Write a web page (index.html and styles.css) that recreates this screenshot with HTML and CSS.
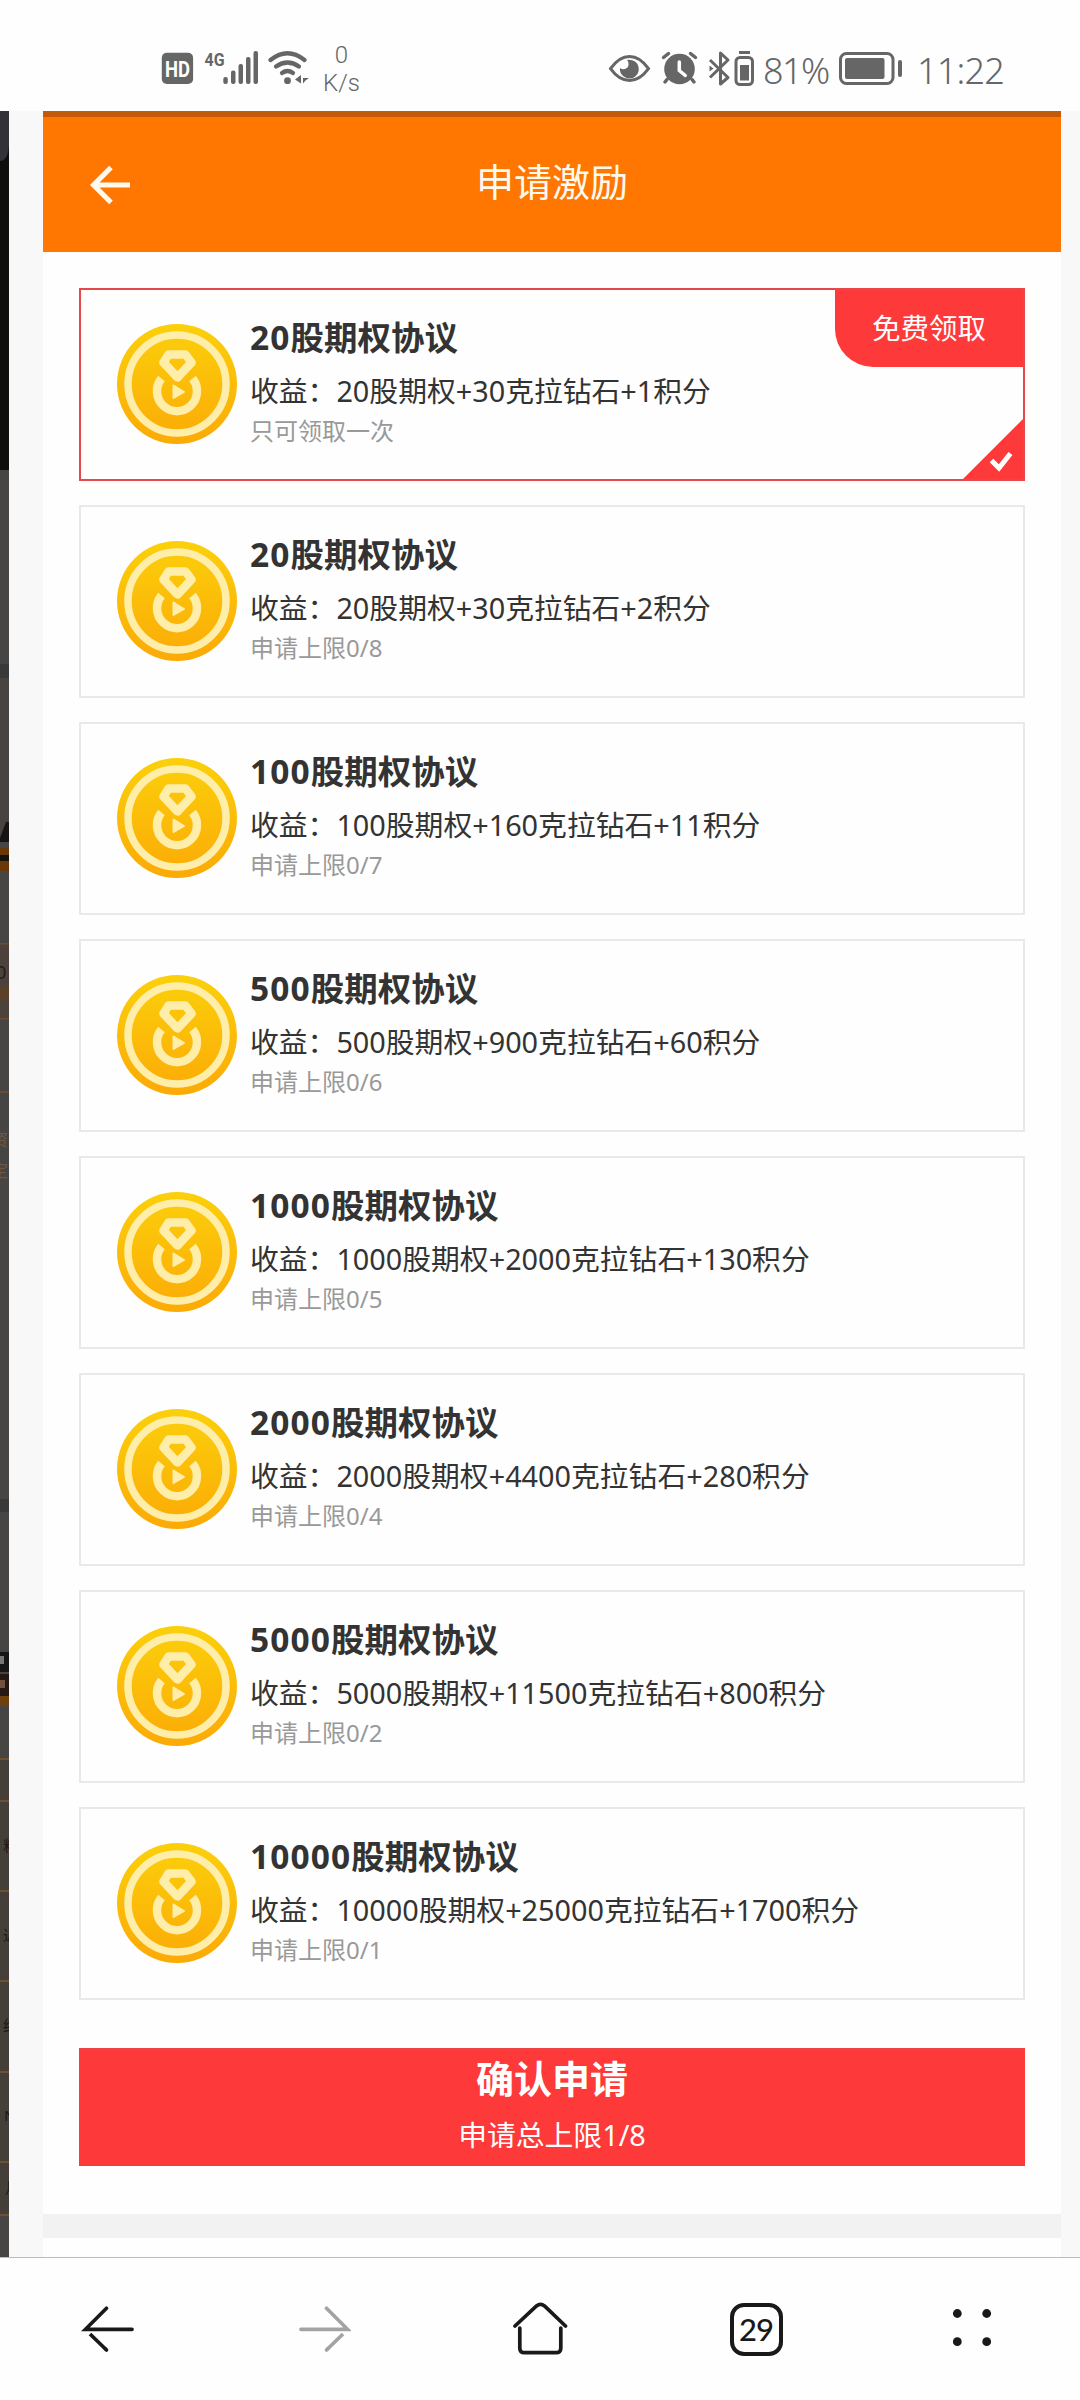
FILE: index.html
```html
<!DOCTYPE html>
<html lang="zh-CN">
<head>
<meta charset="utf-8">
<title>申请激励</title>
<link rel="stylesheet" href="styles.css">
</head>
<body>
<svg class="defs" aria-hidden="true">
  <defs>
    <linearGradient id="gold" x1="0" y1="0" x2="0" y2="1"><stop offset="0" stop-color="#fbd00b"/><stop offset="1" stop-color="#fbaa06"/></linearGradient>
    <symbol id="coin" viewBox="0 0 120 120">
      <circle cx="60" cy="60" r="60" fill="url(#gold)"/>
      <circle cx="60" cy="60" r="49" fill="none" stroke="#ffedaa" stroke-width="7.5"/>
      <path d="M44.5 54.5A20 20 0 1 0 75.500 54.500" fill="none" stroke="#ffedaa" stroke-width="8.500"/>
      <path d="M51.500 30.500H68.500L74.500 38.500L60.500 53.500L46.500 38.500Z" fill="none" stroke="#ffedaa" stroke-width="8.500" stroke-linejoin="round"/>
      <path d="M56.500 61.500L67 68L56.500 74Z" fill="#ffedaa" stroke="#ffedaa" stroke-width="2" stroke-linejoin="round"/>
    </symbol>
  </defs>
</svg>
<header class="status">
  <div class="status-left">
    <svg class="net" width="150" height="44" viewBox="160 48 150 44" fill="#666">
      <rect x="161.800" y="52.700" width="31.300" height="31.300" rx="5"/>
      <text class="hd" x="165" y="76.500" textLength="25" lengthAdjust="spacingAndGlyphs">HD</text>
      <text class="g4" x="204.500" y="65.500" textLength="20" lengthAdjust="spacingAndGlyphs">4G</text>
      <rect x="223.300" y="77" width="4.500" height="7" rx="2"/><rect x="231" y="70.500" width="4.500" height="13.500" rx="2"/><rect x="238.500" y="64" width="4.500" height="20" rx="2"/><rect x="246" y="57" width="4.500" height="27" rx="2"/><rect x="253.500" y="51" width="4.500" height="33" rx="2"/>
      <g fill="none" stroke="#666" stroke-width="4.200" stroke-linecap="round"><path d="M270.500 60Q287.500 46.500 304.500 60"/><path d="M276 66.500Q287.500 58.500 299 66.500"/><path d="M282 73Q287.500 69 293 73"/></g>
      <circle cx="287.500" cy="80.700" r="3.400"/><path d="M301 75v8.500l-6-4zM303 78h6l-3.500 2.500-2.500 3z"/>
    </svg>
    <div class="speed"><span>0</span><span>K/s</span></div>
  </div>
  <div class="status-right">
    <svg width="108" height="40" viewBox="608 50 108 40" fill="#666">
      <path d="M611.500 68.700Q620 56.500 630.500 56.500T649.500 68.700Q641 80.500 630.500 80.500T611.500 68.700Z" fill="none" stroke="#666" stroke-width="3"/>
      <path d="M628 60a9.400 9.400 0 1 1-7 8c4 3 9 0 8.500-4 0-2-.5-3-1.500-4Z"/>
      <circle cx="680.500" cy="69" r="15.300"/>
      <path d="M664.500 57.500l5-4M696.500 57.500l-5-4M668 79.500l-2 2.500M693 79.500l2 2.500" stroke="#666" stroke-width="3.500" stroke-linecap="round"/>
      <path d="M680.300 62v8.500l6 5" fill="none" stroke="#fff" stroke-width="3.500" stroke-linecap="round"/>
    </svg>
    <svg width="48" height="40" viewBox="708 50 48 40">
      <g fill="none" stroke="#666" stroke-width="3"><path d="M711 60L729 77.500L721.500 84V53L729 60L711 77.500" stroke-linejoin="round"/><rect x="737" y="57.500" width="16.500" height="27" rx="4"/><path d="M740 52.500h11"/></g><path d="M710.500 65.500l4 3-4 3zM741 65h9v15.500h-9z" fill="#666"/>
    </svg>
    <span class="pct">81%</span>
    <svg class="batt" width="66" height="36" viewBox="838 50 66 36" fill="#666"><rect x="840.500" y="53.500" width="52.500" height="30" rx="6" fill="none" stroke="#666" stroke-width="3"/><rect x="845" y="58" width="39.500" height="21" rx="2"/><rect x="898" y="60" width="4" height="17" rx="2"/></svg>
    <span class="time">11:22</span>
  </div>
</header>
<main class="view">
  <svg class="behind" width="9" height="2146" viewBox="0 111 9 2146">
    <rect y="111" width="9" height="359" fill="#0e0e0c"/><path d="M0 111H9V145Q8 161 0 161Z" fill="#333238"/>
    <rect y="470" width="9" height="1787" fill="#464544"/>
    <rect y="664" width="9" height="14" fill="#393939"/><rect y="678" width="9" height="150" fill="#484341"/>
    <path d="M9 822V842H0V838L6 822Z" fill="#161414"/>
    <rect y="848" width="9" height="23" fill="#6a3808"/><rect y="855" width="9" height="6" fill="#151311"/>
    <rect y="943" width="9" height="75" fill="#4c423b"/><rect y="988" width="9" height="12" fill="#5c4129"/>
    <g fill="#6a4c31"><rect y="943" width="9" height="1.500"/><rect y="1018" width="9" height="1.500"/><rect y="1091" width="9" height="2"/></g>
    <text x="-4" y="979" font-size="18" fill="#201d1a">0|</text>
    <text x="-9" y="1146" font-size="17" fill="#70583e">资讯</text><text x="-9" y="1177" font-size="17" fill="#70583e">定价</text>
    <rect y="1499" width="9" height="13" fill="#393939"/>
    <rect y="1652" width="9" height="20" fill="#171717"/><rect y="1656" width="4" height="8" fill="#777"/><rect y="1674" width="9" height="22" fill="#241914"/><rect y="1680" width="5" height="8" fill="#74513d"/><rect y="1696" width="9" height="10" fill="#70400c"/>
    <rect y="1758" width="9" height="457" fill="#453f3a"/>
    <g fill="#70502f"><rect y="1758" width="9" height="2"/><rect y="1800" width="9" height="2"/><rect y="1890" width="9" height="2"/><rect y="1980" width="9" height="2"/><rect y="2071" width="9" height="2"/><rect y="2161" width="9" height="2"/><rect y="2214" width="9" height="2"/></g>
    <g fill="#1c1917" font-size="15"><text x="3" y="1851">料</text><text x="3" y="1941">近</text><text x="3" y="2031">约</text><text x="4" y="2121">N</text><text x="5" y="2193">月</text></g>
  </svg>
  <section class="page">
    <div class="topbar">
      <svg class="back" width="42" height="42" viewBox="0 0 42 42"><path d="M41 21H5M22 3.500L4.500 21L22 38.500" fill="none" stroke="#fffaf0" stroke-width="5"/></svg>
      <h1>申请激励</h1>
    </div>
    <div class="content">
      <ul class="plans">
        <li class="plan selected"><svg class="coin"><use href="#coin"/></svg><div class="info"><h2><b>20</b>股期权协议</h2><p>收益：20股期权+30克拉钻石+1积分</p><small>只可领取一次</small></div><span class="badge">免费领取</span><svg class="tick" width="60" height="60" viewBox="0 0 60 60"><path d="M60 0V60H0Z" fill="#fe3939"/><path d="M28.500 41.500L36 49L47.500 34.500" fill="none" stroke="#fff" stroke-width="5"/></svg></li>
        <li class="plan"><svg class="coin"><use href="#coin"/></svg><div class="info"><h2><b>20</b>股期权协议</h2><p>收益：20股期权+30克拉钻石+2积分</p><small>申请上限0/8</small></div></li>
        <li class="plan"><svg class="coin"><use href="#coin"/></svg><div class="info"><h2><b>100</b>股期权协议</h2><p>收益：100股期权+160克拉钻石+11积分</p><small>申请上限0/7</small></div></li>
        <li class="plan"><svg class="coin"><use href="#coin"/></svg><div class="info"><h2><b>500</b>股期权协议</h2><p>收益：500股期权+900克拉钻石+60积分</p><small>申请上限0/6</small></div></li>
        <li class="plan"><svg class="coin"><use href="#coin"/></svg><div class="info"><h2><b>1000</b>股期权协议</h2><p>收益：1000股期权+2000克拉钻石+130积分</p><small>申请上限0/5</small></div></li>
        <li class="plan"><svg class="coin"><use href="#coin"/></svg><div class="info"><h2><b>2000</b>股期权协议</h2><p>收益：2000股期权+4400克拉钻石+280积分</p><small>申请上限0/4</small></div></li>
        <li class="plan"><svg class="coin"><use href="#coin"/></svg><div class="info"><h2><b>5000</b>股期权协议</h2><p>收益：5000股期权+11500克拉钻石+800积分</p><small>申请上限0/2</small></div></li>
        <li class="plan"><svg class="coin"><use href="#coin"/></svg><div class="info"><h2><b>10000</b>股期权协议</h2><p>收益：10000股期权+25000克拉钻石+1700积分</p><small>申请上限0/1</small></div></li>
      </ul>
      <button class="confirm"><strong>确认申请</strong><span>申请总上限1/8</span></button>
    </div>
    <div class="divider"></div>
  </section>
</main>
<nav class="browser-nav">
  <a><svg width="54" height="54" viewBox="0 0 54 54" fill="none" stroke="#191919" stroke-width="3.700" stroke-linecap="round"><path d="M51 27.300H4.500L25.500 6.300"/><path d="M9 32L25 47.500" stroke-linecap="butt"/><path d="M24.500 47L25.500 48"/></svg></a>
  <a><svg width="54" height="54" viewBox="0 0 54 54" fill="none" stroke="#a3a3a3" stroke-width="3.700" stroke-linecap="round"><path d="M4 27.300H50.500L29.500 6.300"/><path d="M46 32L30 47.500" stroke-linecap="butt"/><path d="M30.500 47L29.500 48"/></svg></a>
  <a><svg width="56" height="56" viewBox="0 0 56 56" fill="none" stroke="#191919" stroke-width="3.700" stroke-linecap="round"><path d="M3 25L24.500 5Q28.500 1.800 32.500 5L53.500 25"/><path d="M7.800 27V47Q7.800 51.700 12.500 51.700H44Q48.800 51.700 48.800 47V27"/></svg></a>
  <a><span class="tabs">29</span></a>
  <a><svg width="40" height="40" viewBox="0 0 40 40" fill="#191919"><circle cx="5.300" cy="4.500" r="4.400"/><circle cx="34.700" cy="4.500" r="4.400"/><circle cx="5.300" cy="32.700" r="4.400"/><circle cx="34.700" cy="32.700" r="4.400"/></svg></a>
</nav>
</body>
</html>
```
FILE: styles.css
```css
* { box-sizing: border-box; margin: 0; padding: 0; }
body { width: 1080px; height: 2400px; overflow: hidden; background: #fefefe; font-family: "Noto Sans", "Noto Sans CJK SC", sans-serif; color: #333; }
svg { display: block; flex: none; }
.defs { position: absolute; width: 0; height: 0; }
.status { height: 111px; display: flex; justify-content: space-between; padding: 48px 77px 0 160px; color: #666; }
.status-left, .status-right { display: flex; }
.hd { font: bold 22px Roboto, sans-serif; fill: #fff; }
.g4 { font: bold 19px Roboto, sans-serif; }
.speed { width: 62px; margin: -7px 0 0 0; padding-left: 1px; display: flex; flex-direction: column; align-items: center; font: 350 24px/28px Roboto, sans-serif; white-space: nowrap; }
.status-right { align-items: flex-start; padding-top: 2px; }
.status-right svg + svg { margin-left: -8px; }
.status-right .pct { margin: -1px 0 0 8px; width: 75px; font: 350 36px/44px "Noto Sans", sans-serif; letter-spacing: -1.5px; white-space: nowrap; }
.status-right .batt { margin: 0; }
.time { margin: -1px 0 0 13px; width: 86px; font: 350 36px/44px "Noto Sans", sans-serif; letter-spacing: -.8px; white-space: nowrap; }
.view { height: 2146px; display: flex; background: #f8f8f8; overflow: hidden; }
.behind { overflow: hidden; }
.page { width: 1018px; margin-left: 34px; background: #fefefe; }
.topbar { height: 141px; border-top: 6px solid #c45a08; background: #ff7700; display: grid; grid-template-columns: 48px 1fr 48px; align-items: center; padding: 0 46px; }
h1 { text-align: center; font-size: 38px; line-height: 56px; font-weight: 400; color: #fffaf0; margin-top: -8px; }
.content { height: 1962px; padding: 36px 36px 0; }
.plans { list-style: none; display: grid; gap: 24px; }
.plan { position: relative; height: 193px; border: 2px solid #e9e9e9; display: flex; padding: 34px 36px 0; }
.plan.selected { border-color: #e4484b; }
.coin { width: 120px; height: 120px; margin: 0 13px 0 0; }
.info { display: flex; flex-direction: column; white-space: nowrap; margin-top: -11px; }
h2 { font-size: 33.500px; line-height: 48px; font-weight: 700; }
h2 b { font-weight: 700; letter-spacing: 1.1px; }
.info p { font-size: 28.800px; line-height: 44px; margin-top: 8px; }
.info small { font-size: 24px; line-height: 36px; color: #999; }
.badge { position: absolute; right: 0; top: 0; width: 188px; height: 77px; border-radius: 0 0 0 38px; background: #fe3939; color: #fff; font-size: 28.500px; line-height: 76px; text-align: center; }
.tick { position: absolute; right: 0; bottom: 0; }
.confirm { display: flex; flex-direction: column; align-items: center; width: 946px; height: 118px; margin-top: 48px; border: 0; border-top: 2px solid #ed4344; background: #fe3939; color: #fff; font-family: inherit; padding-top: 2px; }
.confirm strong { font-size: 38px; line-height: 52px; }
.confirm span { font-size: 28.800px; line-height: 40px; margin-top: 11px; }
.divider { height: 24px; background: #f2f2f2; }
.browser-nav { height: 143px; border-top: 1px solid #bbb; display: grid; grid-template-columns: repeat(5, 1fr); }
.browser-nav a { display: flex; align-items: center; justify-content: center; }
.tabs { width: 53px; height: 53px; border: 4px solid #191919; border-radius: 14px; font: 500 31px/45px Lato, sans-serif; color: #191919; text-align: center; letter-spacing: -1px; }
```
